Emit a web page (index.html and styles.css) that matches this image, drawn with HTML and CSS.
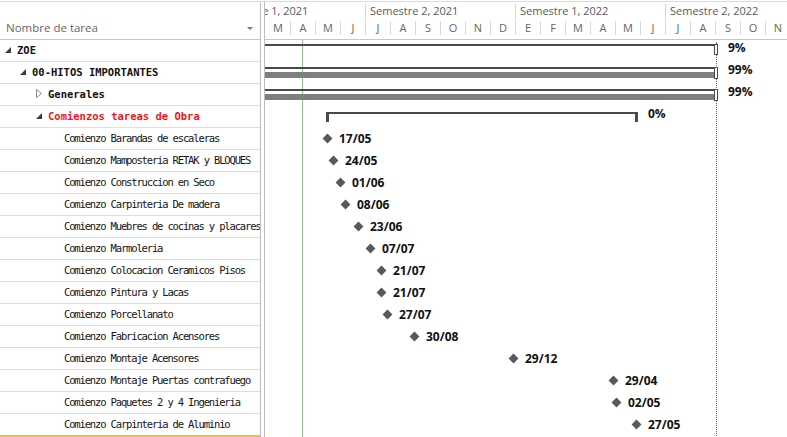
FILE: index.html
```html
<!DOCTYPE html>
<html lang="es">
<head>
<meta charset="utf-8">
<title>Gantt</title>
<link rel="stylesheet" href="styles.css">
</head>
<body>
<div class="app">
  <div class="grid">
    <div class="grid-head"><span>Nombre de tarea</span><span class="dd"></span></div>
    <div class="row l0 b"><svg class="ico" width="6" height="6" viewBox="0 0 6 6"><path d="M6 0V6H0Z" fill="#3c3c3c"/></svg><span>ZOE</span></div>
    <div class="row l1 b"><svg class="ico" width="6" height="6" viewBox="0 0 6 6"><path d="M6 0V6H0Z" fill="#3c3c3c"/></svg><span>00-HITOS IMPORTANTES</span></div>
    <div class="row l2 b"><svg class="ico" width="6" height="9" viewBox="0 0 6 9"><path d="M0.5 0.5L5.5 4.5L0.5 8.5Z" fill="none" stroke="#8a8a8a"/></svg><span>Generales</span></div>
    <div class="row l2 b red"><svg class="ico" width="6" height="6" viewBox="0 0 6 6"><path d="M6 0V6H0Z" fill="#3c3c3c"/></svg><span>Comienzos tareas de Obra</span></div>
    <div class="row l3">Comienzo Barandas de escaleras</div>
    <div class="row l3">Comienzo Mamposteria RETAK y BLOQUES</div>
    <div class="row l3">Comienzo Construccion en Seco</div>
    <div class="row l3">Comienzo Carpinteria De madera</div>
    <div class="row l3">Comienzo Muebres de cocinas y placares</div>
    <div class="row l3">Comienzo Marmoleria</div>
    <div class="row l3">Comienzo Colocacion Ceramicos Pisos</div>
    <div class="row l3">Comienzo Pintura y Lacas</div>
    <div class="row l3">Comienzo Porcellanato</div>
    <div class="row l3">Comienzo Fabricacion Acensores</div>
    <div class="row l3">Comienzo Montaje Acensores</div>
    <div class="row l3">Comienzo Montaje Puertas contrafuego</div>
    <div class="row l3">Comienzo Paquetes 2 y 4 Ingenieria</div>
    <div class="row l3 last">Comienzo Carpinteria de Aluminio</div>
  </div>
  <div class="split"></div>
  <div class="chart">
    <div class="chead">
      <div class="sems">
        <div class="sem">Semestre 1, 2021</div>
        <div class="sem">Semestre 2, 2021</div>
        <div class="sem">Semestre 1, 2022</div>
        <div class="sem">Semestre 2, 2022</div>
      </div>
      <div class="months">
        <div class="m first">M</div><div class="m">A</div><div class="m">M</div><div class="m">J</div>
        <div class="m">J</div><div class="m">A</div><div class="m">S</div><div class="m">O</div><div class="m">N</div><div class="m">D</div>
        <div class="m">E</div><div class="m">F</div><div class="m">M</div><div class="m">A</div><div class="m">M</div><div class="m">J</div>
        <div class="m">J</div><div class="m">A</div><div class="m">S</div><div class="m">O</div><div class="m">N</div>
      </div>
    </div>
    <div class="cbody">
      <div class="today" style="left:37px"></div>
      <div class="finish" style="left:451px"></div>

      <div class="crow">
        <div class="sline zoe" style="left:-100px;width:550px"></div>
        <div class="scap zoe" style="left:449px"></div>
        <div class="pct" style="left:463px">9%</div>
      </div>
      <div class="crow">
        <div class="sline" style="left:-100px;width:550px"></div>
        <div class="sprog" style="left:-100px;width:549px"></div>
        <div class="scap" style="left:449px"></div>
        <div class="pct" style="left:463px">99%</div>
      </div>
      <div class="crow">
        <div class="sline" style="left:-100px;width:550px"></div>
        <div class="sprog" style="left:-100px;width:549px"></div>
        <div class="scap" style="left:449px"></div>
        <div class="pct" style="left:463px">99%</div>
      </div>
      <div class="crow">
        <div class="bracket" style="left:61px;width:312px"></div>
        <div class="pct" style="left:383px">0%</div>
      </div>

      <div class="crow"><div class="ms" style="left:62px"><i class="dia"></i><b>17/05</b></div></div>
      <div class="crow"><div class="ms" style="left:68px"><i class="dia"></i><b>24/05</b></div></div>
      <div class="crow"><div class="ms" style="left:75px"><i class="dia"></i><b>01/06</b></div></div>
      <div class="crow"><div class="ms" style="left:80px"><i class="dia"></i><b>08/06</b></div></div>
      <div class="crow"><div class="ms" style="left:93px"><i class="dia"></i><b>23/06</b></div></div>
      <div class="crow"><div class="ms" style="left:105px"><i class="dia"></i><b>07/07</b></div></div>
      <div class="crow"><div class="ms" style="left:116px"><i class="dia"></i><b>21/07</b></div></div>
      <div class="crow"><div class="ms" style="left:116px"><i class="dia"></i><b>21/07</b></div></div>
      <div class="crow"><div class="ms" style="left:122px"><i class="dia"></i><b>27/07</b></div></div>
      <div class="crow"><div class="ms" style="left:149px"><i class="dia"></i><b>30/08</b></div></div>
      <div class="crow"><div class="ms" style="left:248px"><i class="dia"></i><b>29/12</b></div></div>
      <div class="crow"><div class="ms" style="left:348px"><i class="dia"></i><b>29/04</b></div></div>
      <div class="crow"><div class="ms" style="left:351px"><i class="dia"></i><b>02/05</b></div></div>
      <div class="crow"><div class="ms" style="left:371px"><i class="dia"></i><b>27/05</b></div></div>
    </div>
  </div>
</div>
</body>
</html>
```

FILE: styles.css
```css
* { box-sizing: border-box; }
html, body { margin: 0; padding: 0; background: #fff; }
body {
  width: 787px;
  height: 437px;
  overflow: hidden;
  font-family: "Open Sans", "Noto Sans", sans-serif;
}
.app {
  display: flex;
  margin-top: 1px;
  border-top: 1px solid #dadada;
  height: 436px;
}

/* left task grid */
.grid {
  width: 261px;
  flex: none;
  border-right: 1px solid #bdbdbd;
}
.grid-head {
  height: 38px;
  border-bottom: 1px solid #c8c8c8;
  display: flex;
  align-items: flex-end;
  justify-content: space-between;
  padding: 0 7px 3px 6px;
  font-size: 11.5px;
  line-height: 16px;
  color: #666;
}
.dd {
  width: 0;
  height: 0;
  border-left: 3px solid transparent;
  border-right: 3px solid transparent;
  border-top: 3px solid #777;
  margin-bottom: 6px;
}
.row {
  height: 22px;
  border-bottom: 1px solid #dedede;
  display: flex;
  align-items: center;
  padding-bottom: 2px;
  font-family: "DejaVu Sans Mono", monospace;
  font-size: 10.5px;
  letter-spacing: -1.15px;
  color: #141414;
  white-space: nowrap;
  overflow: hidden;
}
.l0 { padding-left: 5px; }
.l1 { padding-left: 20px; }
.l2 { padding-left: 36px; }
.l3 { padding-left: 64px; }
.b { font-weight: bold; letter-spacing: 0; color: #111; }
.red { color: #e8191e; }
.ico { flex: none; margin-right: 6px; }
.last { height: 23px; border-bottom: 2px solid #f2c12e; }

.split { width: 3px; flex: none; }

/* chart */
.chart {
  flex: 1;
  min-width: 0;
  border-left: 1px solid #bdbdbd;
  overflow: hidden;
  position: relative;
}
.chead {
  height: 38px;
  border-bottom: 1px solid #c8c8c8;
  color: #595959;
}
.sems {
  display: flex;
  margin-left: -50px;
  height: 18px;
  padding-top: 2px;
}
.sem {
  flex: none;
  width: 150px;
  height: 16px;
  border-left: 1px solid #d4d4d4;
  padding-left: 4px;
  font-size: 11px;
  line-height: 14px;
  white-space: nowrap;
}
.months {
  display: flex;
  height: 19px;
  padding-top: 1px;
}
.m {
  flex: none;
  width: 25px;
  height: 14px;
  border-left: 1px solid #dadada;
  text-align: center;
  font-size: 11px;
  line-height: 14px;
  color: #666;
}
.m.first { border-left-color: transparent; }

.cbody { position: relative; }
.crow { position: relative; height: 22px; }
.today {
  position: absolute;
  top: 0;
  bottom: -40px;
  width: 1px;
  background: #8cc48c;
}
.finish {
  position: absolute;
  top: 2px;
  bottom: -40px;
  width: 0;
  border-left: 1px dotted #666;
}

.sline {
  position: absolute;
  top: 5px;
  height: 2px;
  background: #4a4a4a;
}
.sline.zoe { top: 4px; }
.sprog {
  position: absolute;
  top: 10px;
  height: 6px;
  background: #7f7f7f;
}
.scap {
  position: absolute;
  top: 5px;
  width: 4px;
  height: 12px;
  border: 1px solid #4a4a4a;
  background: #fff;
}
.scap.zoe { top: 4px; height: 11px; }
.pct {
  position: absolute;
  top: 1px;
  font-weight: 700;
  font-size: 12px;
  line-height: 14px;
  color: #111;
}
.bracket {
  position: absolute;
  top: 6px;
  height: 2px;
  background: #4a4a4a;
}
.bracket::before,
.bracket::after {
  content: "";
  position: absolute;
  top: 0;
  width: 3px;
  height: 10px;
  background: #4a4a4a;
}
.bracket::before { left: 0; }
.bracket::after { right: 0; }

.ms {
  position: absolute;
  top: 0;
  height: 21px;
  display: flex;
  align-items: center;
  gap: 7px;
  transform: translateX(-5px);
  white-space: nowrap;
}
.dia {
  display: block;
  width: 7px;
  height: 7px;
  margin: 0 1.5px;
  background: #595959;
  transform: rotate(45deg);
}
.ms b {
  font-weight: 700;
  font-size: 12px;
  line-height: 14px;
  color: #111;
}
```
